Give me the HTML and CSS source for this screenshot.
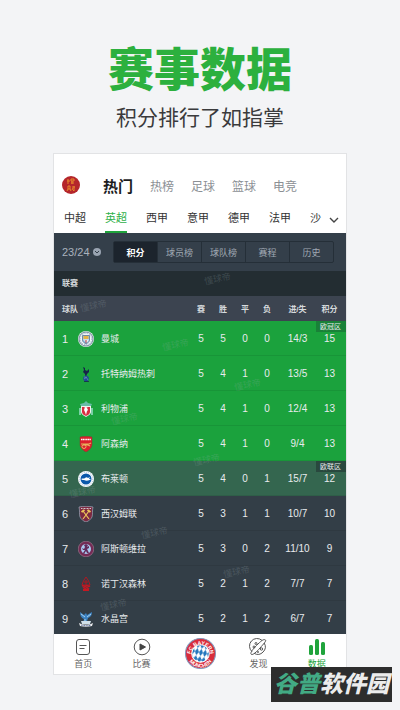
FILE: index.html
```html
<!DOCTYPE html>
<html lang="zh-CN">

<head>
   <meta charset="UTF-8">
   <meta name="viewport" content="width=device-width, initial-scale=1.0">
   <title>赛事数据</title>
   <link rel="stylesheet" href="styles.css">
</head>

<body>
   <header class="intro">
      <h1 class="title">赛事数据</h1>
      <p class="subtitle">积分排行了如指掌</p>
   </header>

   <main class="phone">
      <nav class="sports">
         <svg class="badge" viewBox="0 0 18 18">
            <circle cx="9" cy="9" r="9" fill="#b5262b" />
            <path d="M6 3v5M5 5h3M9 3h3v2H9zM9 7h3M10 5v3M6 10h2v3H6zM5 15l1-2M8 13l1 2M10 11h3M12 10v5l-1-1M11 12l-1 2" fill="none" stroke="#e88a2c" />
         </svg>
         <a class="sport sport-on" href="#">热门</a>
         <a class="sport" href="#">热榜</a>
         <a class="sport" href="#">足球</a>
         <a class="sport" href="#">篮球</a>
         <a class="sport" href="#">电竞</a>
      </nav>

      <nav class="leagues">
         <div class="league-list">
            <a class="league" href="#">中超</a>
            <a class="league league-on" href="#">英超</a>
            <a class="league" href="#">西甲</a>
            <a class="league" href="#">意甲</a>
            <a class="league" href="#">德甲</a>
            <a class="league" href="#">法甲</a>
            <a class="league" href="#">沙</a>
         </div>
         <button class="more" aria-label="更多">
            <svg viewBox="0 0 10 10"><path d="M1 3l4 4 4-4" fill="none" stroke="#444" stroke-width="1.4" /></svg>
         </button>
      </nav>

      <div class="filter">
         <div class="season">
            <select class="season-select" aria-label="赛季">
               <option>23/24</option>
            </select>
            <svg class="season-icon" viewBox="0 0 8 8">
               <circle cx="4" cy="4" r="4" fill="#9aa4b2" />
               <path d="M2 3l2 2 2-2" fill="none" stroke="#343f4a" />
            </svg>
         </div>
         <div class="segments">
            <button class="segment segment-on">积分</button>
            <button class="segment">球员榜</button>
            <button class="segment">球队榜</button>
            <button class="segment">赛程</button>
            <button class="segment">历史</button>
         </div>
      </div>

      <section class="board">
         <h2 class="board-title">联赛</h2>
         <table class="table">
            <thead>
               <tr>
                  <th class="col-team">球队</th>
                  <th class="col-num">赛</th>
                  <th class="col-num">胜</th>
                  <th class="col-num">平</th>
                  <th class="col-num">负</th>
                  <th class="col-goals">进/失</th>
                  <th class="col-points">积分</th>
               </tr>
            </thead>
            <tbody>
               <tr class="champions">
                  <td><div class="team"><span class="rank">1</span>
                     <svg class="crest" viewBox="0 0 16 16">
                        <circle cx="8" cy="8" r="8" fill="#f1f5f8" />
                        <circle cx="8" cy="8" r="7" fill="none" stroke="#37506e" stroke-width=".7" />
                        <circle cx="8" cy="8" r="5.8" fill="none" stroke="#8fa7bf" stroke-width="1" stroke-dasharray="1 1" />
                        <path d="M4.5 4.5h7V9c0 2-2 3-3.500 4C6.500 12 4.500 11 4.500 9z" fill="#9cc7e8" stroke="#35516f" stroke-width=".6" />
                        <path d="M5.500 5h5v3h-5z" fill="#e5b344" />
                        <path d="M5 8.500l6 0-2 3z" fill="#f2f2f2" />
                        <path d="M8 9v3" stroke="#b4333f" />
                     </svg>曼城</div></td>
                  <td>5</td><td>5</td><td>0</td><td>0</td><td>14/3</td>
                  <td class="points">15<span class="zone">欧冠区</span></td>
               </tr>
               <tr class="champions">
                  <td><div class="team"><span class="rank">2</span>
                     <svg class="crest" viewBox="0 0 16 16">
                        <path d="M5 1l2 1 0 2 2 1 2-2 0 3-2 2-1 2-1-1 0-1-2-2 1-2z" fill="#17234a" />
                        <path d="M8 7l0 4" stroke="#17234a" stroke-width=".7" />
                        <circle cx="8" cy="12.500" r="2.800" fill="#20469b" />
                        <path d="M6 11c2 0 3 1 4 3M6 13l3-2" fill="none" stroke="#7fb3b0" stroke-width=".6" />
                        <path d="M6 15.500h5" stroke="#17234a" stroke-width=".8" />
                     </svg>托特纳姆热刺</div></td>
                  <td>5</td><td>4</td><td>1</td><td>0</td><td>13/5</td>
                  <td class="points">13</td>
               </tr>
               <tr class="champions">
                  <td><div class="team"><span class="rank">3</span>
                     <svg class="crest" viewBox="0 0 16 16">
                        <path d="M2 3l4-1 2-2 2 2 4 1-1 2H3z" fill="#68bda7" />
                        <path d="M2 7v7M14 7v7" stroke="#9adfc9" stroke-width="1.500" />
                        <path d="M3 5h10v6c0 2-3 4-5 5-2-1-5-3-5-5z" fill="#eef2ed" />
                        <path d="M4 6l2 0 2 1 2-1 2 0v5c0 2-2 3-4 4-2-1-4-2-4-4z" fill="#d72e40" />
                        <path d="M7 6l2 1 1 2-1 1-1 4-1-3-1-2z" fill="#fff" />
                     </svg>利物浦</div></td>
                  <td>5</td><td>4</td><td>1</td><td>0</td><td>12/4</td>
                  <td class="points">13</td>
               </tr>
               <tr class="champions">
                  <td><div class="team"><span class="rank">4</span>
                     <svg class="crest" viewBox="0 0 16 16">
                        <path d="M2 1c4-1 8-1 12 0v7c0 4-3 6-6 8-3-2-6-4-6-8z" fill="#dc1f2d" stroke="#8a3b35" stroke-width=".5" />
                        <path d="M3 3.500h10" stroke="#fff" stroke-width="1.600" stroke-dasharray="1.300 .4" />
                        <path d="M3 8h8l2-1M5 9h5l2 1" fill="none" stroke="#e6b45e" stroke-width="1.200" />
                        <circle cx="6" cy="10.500" r="2" fill="none" stroke="#e6b45e" />
                     </svg>阿森纳</div></td>
                  <td>5</td><td>4</td><td>1</td><td>0</td><td>9/4</td>
                  <td class="points">13</td>
               </tr>
               <tr class="europa">
                  <td><div class="team"><span class="rank">5</span>
                     <svg class="crest" viewBox="0 0 16 16">
                        <circle cx="8" cy="8" r="8" fill="#fff" />
                        <circle cx="8" cy="8" r="6.800" fill="none" stroke="#7fa3cf" stroke-dasharray="1 1" stroke-width=".8" />
                        <circle cx="8" cy="8" r="5.500" fill="#0a58ab" />
                        <path d="M3 8c2-1 3 0 4-1 1-1 2-1 3 0l2-1-1 2 2 0c-2 2-5 2-7 1-1 0-2 0-3-1z" fill="#fff" />
                     </svg>布莱顿</div></td>
                  <td>5</td><td>4</td><td>0</td><td>1</td><td>15/7</td>
                  <td class="points">12<span class="zone">欧联区</span></td>
               </tr>
               <tr>
                  <td><div class="team"><span class="rank">6</span>
                     <svg class="crest" viewBox="0 0 16 16">
                        <path d="M1 1c5-1 9-1 14 0-1 4 0 7-1 10-1 2-3 4-6 5-3-1-5-3-6-5-1-3 0-6-1-10z" fill="#7c2941" stroke="#a8c1d2" stroke-width=".6" />
                        <path d="M3 2.500h10" stroke="#d5c5ce" stroke-dasharray="1 .5" />
                        <path d="M5 5l6 8M11 5l-6 8" stroke="#edc45b" stroke-width="1.200" />
                        <path d="M3.500 6l3-2M12.500 6l-3-2" stroke="#edc45b" stroke-width="2" />
                     </svg>西汉姆联</div></td>
                  <td>5</td><td>3</td><td>1</td><td>1</td><td>10/7</td>
                  <td class="points">10</td>
               </tr>
               <tr>
                  <td><div class="team"><span class="rank">7</span>
                     <svg class="crest" viewBox="0 0 16 16">
                        <circle cx="8" cy="8" r="7.800" fill="#742b55" stroke="#c8a4b8" stroke-width=".4" />
                        <circle cx="8" cy="8" r="5" fill="#a9c9ef" />
                        <path d="M6 4l2-1 2 1-1 2 2-1 0 2-2 1 1 2 1 2-2 0-1-2-2 3-1-1 2-3-2 0-1-2 2 1 1-2z" fill="#63295a" />
                     </svg>阿斯顿维拉</div></td>
                  <td>5</td><td>3</td><td>0</td><td>2</td><td>11/10</td>
                  <td class="points">9</td>
               </tr>
               <tr>
                  <td><div class="team"><span class="rank">8</span>
                     <svg class="crest" viewBox="0 0 16 16">
                        <path d="M8 1l2 3 1 2 1 3H4l1-3 1-2z" fill="none" stroke="#ad1923" />
                        <path d="M8 4v5M6 6h4" stroke="#ad1923" />
                        <path d="M4 10c2-1 2 1 4 0s2 1 4 0M5 12c1-1 2 1 3 0s2 1 3 0" fill="none" stroke="#c61822" stroke-width="1.500" />
                        <path d="M5 13h6v2H5z" fill="#c61822" />
                     </svg>诺丁汉森林</div></td>
                  <td>5</td><td>2</td><td>1</td><td>2</td><td>7/7</td>
                  <td class="points">7</td>
               </tr>
               <tr>
                  <td><div class="team"><span class="rank">9</span>
                     <svg class="crest" viewBox="0 0 16 16">
                        <path d="M2 1l4 3 2-2 1 2 5-3c0 3-1 5-4 6l-1 3 1 2H5l1-4C3 7 2 4 2 1z" fill="#3c83c4" />
                        <path d="M3 3l4 3M13 3l-4 3M7 8l0 3" stroke="#c5e4f5" stroke-width=".8" />
                        <path d="M3 10h10l-1 3H4z" fill="#cfdfe9" />
                        <path d="M1 12c4 2 10 2 14 0l-1 3c-4 1-8 1-12 0z" fill="#eee" />
                        <path d="M3 14c3 1 7 1 10 0" fill="none" stroke="#52689c" stroke-dasharray="1 .6" />
                     </svg>水晶宫</div></td>
                  <td>5</td><td>2</td><td>1</td><td>2</td><td>6/7</td>
                  <td class="points">7</td>
               </tr>
            </tbody>
         </table>
         <span class="mark mark-1">懂球帝</span>
         <span class="mark mark-2">懂球帝</span>
         <span class="mark mark-3">懂球帝</span>
         <span class="mark mark-4">懂球帝</span>
         <span class="mark mark-5">懂球帝</span>
         <span class="mark mark-6">懂球帝</span>
         <span class="mark mark-7">懂球帝</span>
         <span class="mark mark-8">懂球帝</span>
         <span class="mark mark-9">懂球帝</span>
         <span class="mark mark-10">懂球帝</span>
      </section>

      <nav class="tabbar">
         <a class="tab" href="#">
            <svg class="tab-icon" viewBox="0 0 18 18" fill="none" stroke="#555">
               <rect x="2.500" y="1.500" width="13" height="15" rx="2.500" />
               <path d="M5.500 7.500h7M5.500 10.500h5" stroke-width="1.200" />
            </svg>
            首页
         </a>
         <a class="tab" href="#">
            <svg class="tab-icon" viewBox="0 0 18 18">
               <circle cx="9" cy="9" r="7.800" fill="none" stroke="#555" />
               <path d="M7 6l5.500 3L7 12z" fill="#444" stroke="#444" stroke-linejoin="round" />
            </svg>
            比赛
         </a>
         <a class="tab" href="#" aria-label="主队">
            <svg class="club" viewBox="0 0 60 60">
               <defs>
                  <pattern id="diamonds" width="8" height="14" patternUnits="userSpaceOnUse" patternTransform="rotate(12)">
                     <rect width="8" height="14" fill="#fff" />
                     <path d="M4 0l4 7-4 7-4-7z" fill="#2477bd" />
                  </pattern>
                  <path id="arc-top" d="M11 32a19 19 0 0 1 38 0" />
                  <path id="arc-bottom" d="M4 31a26 26 0 0 0 52 0" />
               </defs>
               <circle cx="30" cy="30" r="29" fill="#d92c3b" stroke="#8298bb" stroke-width="2" />
               <circle cx="30" cy="30" r="17" fill="url(#diamonds)" stroke="#fff" stroke-width="2" />
               <text class="club-text"><textPath href="#arc-top" startOffset="50%">FC BAYERN</textPath></text>
               <text class="club-text"><textPath href="#arc-bottom" startOffset="50%">MÜNCHEN</textPath></text>
            </svg>
         </a>
         <a class="tab" href="#">
            <svg class="tab-icon" viewBox="0 0 18 18" fill="none" stroke="#555">
               <path d="M13 2.400A7.500 7.500 0 0 0 3 13.600M5 15.300A7.500 7.500 0 0 0 15.200 5" />
               <path d="M2.500 16.500c-2-1 1-5 5-9s7-7 9-5.500c1 1-2 4-5.500 8s-7 7-8.500 6.500z" />
               <circle cx="7" cy="5.500" r="1" /><circle cx="5" cy="9" r="1" /><circle cx="12.500" cy="11" r="1.200" />
               <circle cx="9" cy="14" r=".6" />
            </svg>
            发现
         </a>
         <a class="tab tab-on" href="#">
            <svg class="tab-icon" viewBox="0 0 18 18" fill="#20a43c">
               <rect x="1" y="7" width="4" height="10" rx="1.500" />
               <rect x="7" y="1" width="4" height="16" rx="1.500" />
               <rect x="13" y="4" width="4" height="13" rx="1.500" />
            </svg>
            数据
         </a>
      </nav>
   </main>

   <div class="site"><span class="site-green">谷普</span>软件园</div>
</body>

</html>
```

FILE: styles.css
```css
* {
   box-sizing: border-box;
}

body {
   position: relative;
   min-height: 100vh;
   margin: 0;
   padding: 0 53px;
   background-color: #f3f4f6;
   font-family: "Liberation Sans", "Noto Sans CJK SC", sans-serif;
}

a {
   color: inherit;
   text-decoration: none;
}

button {
   padding: 0;
   border: 0;
   background: none;
   font-family: inherit;
}

svg {
   display: block;
}

.intro {
   padding-top: 42px;
   text-align: center;
   white-space: nowrap;
}

.title {
   margin: 0;
   color: #2cb03e;
   font-size: 46px;
   font-weight: 900;
   line-height: 56px;
}

.subtitle {
   margin: 5px 0 20px;
   color: #3a3a3c;
   font-size: 21px;
   font-weight: 400;
   line-height: 30px;
}

.phone {
   border: 1px solid #e2e3e5;
   background-color: #fff;
}

.sports {
   display: flex;
   align-items: center;
   gap: 17px;
   height: 52px;
   padding: 10px 8px 0;
   color: #8b8f94;
   font-size: 12px;
   white-space: nowrap;
}

.badge {
   width: 18px;
   height: 18px;
   margin-right: 6px;
}

.sport-on {
   color: #1c1c1e;
   font-size: 15px;
   font-weight: bold;
}

.leagues {
   display: flex;
   height: 27px;
}

.league-list {
   display: flex;
   flex: 1;
   gap: 19px;
   padding-left: 10px;
   overflow: hidden;
   color: #333;
   font-size: 11px;
   line-height: 25px;
   white-space: nowrap;
}

.league-on {
   border-bottom: 2px solid #20a43c;
   color: #2fb04a;
}

.more {
   width: 24px;
   padding: 0 7px;
}

.filter {
   display: flex;
   align-items: center;
   height: 38px;
   padding: 0 12px 0 8px;
   background-color: #343f4a;
}

.season {
   display: flex;
   align-items: center;
   gap: 2px;
   width: 51px;
}

.season-select {
   width: 29px;
   padding: 0;
   border: 0;
   appearance: none;
   background: none;
   color: #aab2bd;
   font-family: inherit;
   font-size: 11px;
}

.season-icon {
   width: 8px;
   height: 8px;
}

.segments {
   display: flex;
   flex: 1;
   height: 22px;
   border: 1px solid #252f38;
   border-radius: 2px;
}

.segment {
   flex: 1;
   border-left: 1px solid #252f38;
   color: #a0a9b3;
   font-size: 9px;
   white-space: nowrap;
}

.segment-on {
   border-left: 0;
   background-color: #1c242d;
   color: #fff;
   font-weight: bold;
}

.board {
   position: relative;
   height: 363px;
   overflow: hidden;
   background-color: #333e47;
}

.board-title {
   margin: 0;
   padding-left: 8px;
   background-color: #232d32;
   color: #d6dadd;
   font-size: 8px;
   line-height: 25px;
}

.table {
   width: 100%;
   border-collapse: collapse;
   table-layout: fixed;
   color: #e8ebee;
   font-size: 10px;
   text-align: center;
}

.table th {
   height: 25px;
   padding: 0;
   background-color: #3c4450;
   color: #d6dadd;
   font-size: 8px;
   white-space: nowrap;
}

.table td {
   height: 35px;
   padding: 0;
   box-shadow: inset 0 -1px rgba(0, 0, 0, 0.08);
}

.table .col-team {
   padding-left: 8px;
   text-align: left;
}

.col-num {
   width: 22px;
}

.col-goals {
   width: 39px;
}

.col-points {
   width: 29px;
}

.table .col-points,
.table .points {
   position: relative;
   padding-right: 4px;
}

.team {
   display: flex;
   align-items: center;
   padding-left: 8px;
   font-size: 9px;
   white-space: nowrap;
}

.rank {
   width: 16px;
   font-size: 11px;
   text-align: left;
}

.crest {
   width: 16px;
   height: 16px;
   margin-right: 7px;
}

.champions {
   background-color: #1ba23d;
}

.europa {
   background-color: #34664f;
}

.zone {
   position: absolute;
   top: 0;
   right: 0;
   padding: 0 5px 0 4px;
   background-color: #198138;
   font-size: 7px;
   line-height: 11px;
   white-space: nowrap;
}

.europa .zone {
   background-color: #29483e;
}

/* faint diagonal brand marks over the table */
.mark {
   position: absolute;
   color: rgba(160, 175, 180, 0.22);
   font-size: 9px;
   line-height: 12px;
   transform: rotate(-12deg);
   pointer-events: none;
}

.mark-1 { top: 29px; left: 26px; }
.mark-2 { top: 68px; left: 108px; }
.mark-3 { top: 2px; left: 150px; }
.mark-4 { top: 108px; left: 180px; }
.mark-5 { top: 142px; left: 57px; }
.mark-6 { top: 183px; left: 139px; }
.mark-7 { top: 215px; left: 15px; }
.mark-8 { top: 256px; left: 87px; }
.mark-9 { top: 295px; left: 169px; }
.mark-10 { top: 328px; left: 46px; }

.tabbar {
   display: flex;
   height: 40px;
}

.tab {
   display: flex;
   flex: 1;
   flex-direction: column;
   align-items: center;
   padding-top: 4px;
   color: #666;
   font-size: 9px;
   line-height: 16px;
}

.tab-on {
   color: #20a43c;
}

.tab-icon {
   width: 18px;
   height: 18px;
}

.club {
   width: 31px;
   height: 31px;
}

.club-text {
   fill: #fff;
   font-size: 10px;
   font-weight: bold;
   text-anchor: middle;
}

.site {
   position: absolute;
   right: 8px;
   bottom: 8px;
   padding: 0 3px;
   background-color: #2d2d2d;
   color: #ececec;
   font-size: 23px;
   font-style: italic;
   font-weight: 900;
   line-height: 35px;
   white-space: nowrap;
}

.site-green {
   color: #42aa84;
}
```
